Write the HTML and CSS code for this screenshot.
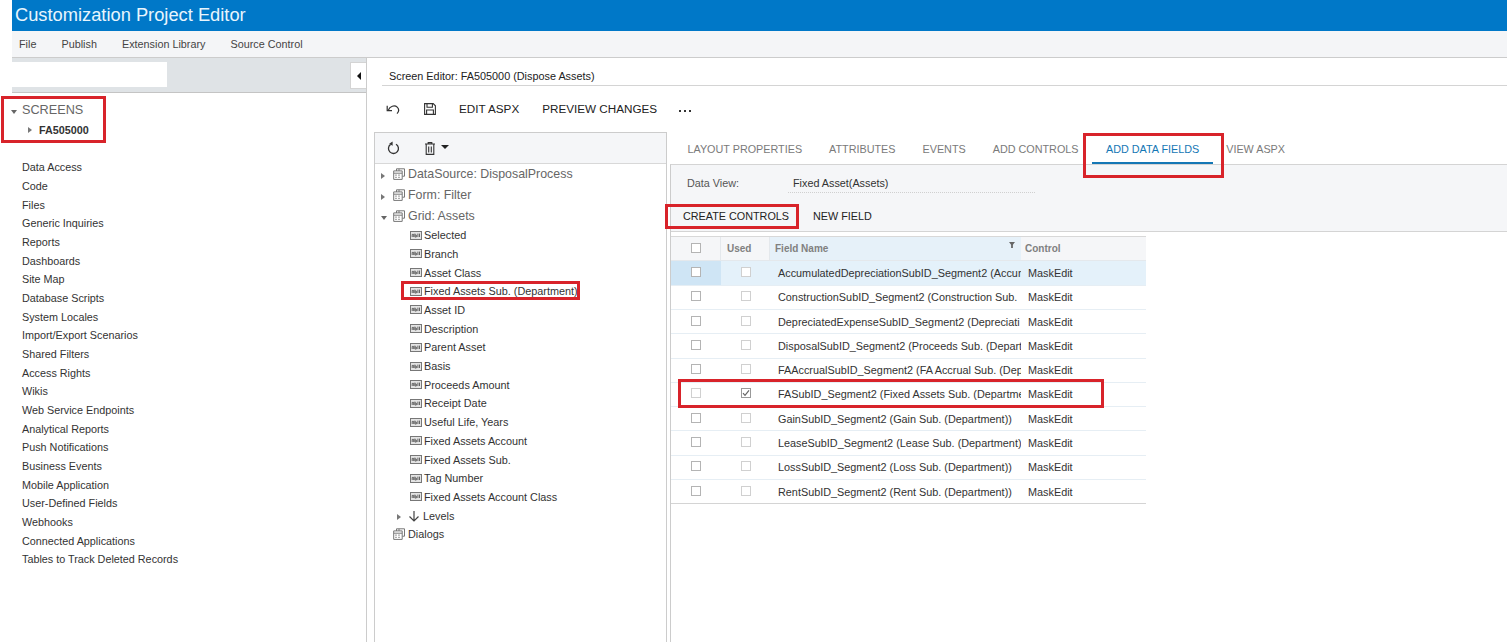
FILE: index.html
```html
<!DOCTYPE html>
<html lang="en">
<head>
<meta charset="utf-8">
<title>Customization Project Editor</title>
<link rel="stylesheet" href="styles.css">
</head>
<body>
<svg class="defs" width="0" height="0" aria-hidden="true">
  <symbol id="i-abl" viewBox="0 0 12 9">
    <rect x="0.5" y="0.5" width="11" height="8" fill="#e4e4e4" stroke="#777"/>
    <path d="M2.2 6V3.4h1.5V6M4.9 2.6V6h1.4V4H4.9M7.9 2.6V6M9.5 2.6V6" fill="none" stroke="#555" stroke-width="0.9"/>
  </symbol>
  <symbol id="i-form" viewBox="0 0 12 12">
    <path d="M3.5 3V0.8h8v7.4H9.2M6 3V0.8" fill="none" stroke="#777" stroke-width="1"/>
    <path d="M6 2.9h3.2v8.5H0.7V2.9zM0.7 5.2h8.5" fill="#fff" stroke="#777" stroke-width="1"/>
    <path d="M2.4 7.2h1.2M5.4 7.2h1.2M2.4 9.4h1.2M5.4 9.4h1.2" stroke="#777" stroke-width="1.2"/>
  </symbol>
  <symbol id="i-check" viewBox="0 0 10 10">
    <path d="M2 5.2l2 2.2 4-5" fill="none" stroke="#666" stroke-width="1.2"/>
  </symbol>
</svg>

<div class="app">
  <header class="titlebar">Customization Project Editor</header>
  <nav class="menubar">
    <span class="menu-item">File</span>
    <span class="menu-item">Publish</span>
    <span class="menu-item">Extension Library</span>
    <span class="menu-item">Source Control</span>
  </nav>

  <div class="workspace">
    <aside class="sidebar">
      <div class="sidebar-search">
        <div class="search-input"></div>
        <div class="collapse-btn"><i class="caret-left"></i></div>
      </div>
      <div class="sidebar-body">
        <div class="screens-row"><i class="caret-down"></i><span>SCREENS</span></div>
        <div class="screen-row"><i class="caret-right"></i><span>FA505000</span></div>
        <ul class="nav-list">
          <li>Data Access</li>
          <li>Code</li>
          <li>Files</li>
          <li>Generic Inquiries</li>
          <li>Reports</li>
          <li>Dashboards</li>
          <li>Site Map</li>
          <li>Database Scripts</li>
          <li>System Locales</li>
          <li>Import/Export Scenarios</li>
          <li>Shared Filters</li>
          <li>Access Rights</li>
          <li>Wikis</li>
          <li>Web Service Endpoints</li>
          <li>Analytical Reports</li>
          <li>Push Notifications</li>
          <li>Business Events</li>
          <li>Mobile Application</li>
          <li>User-Defined Fields</li>
          <li>Webhooks</li>
          <li>Connected Applications</li>
          <li>Tables to Track Deleted Records</li>
        </ul>
      </div>
    </aside>

    <main class="editor">
      <div class="editor-title">Screen Editor: FA505000 (Dispose Assets)</div>
      <div class="editor-toolbar">
        <svg class="tb-undo" width="14" height="12" viewBox="0 0 14 12"><path d="M2.4 7C3.8 3.2 8.6 1.6 11.2 4.2 13.2 6.2 12.8 8.8 11 10.6" fill="none" stroke="#333" stroke-width="1.2"/><path d="M1.2 2.8V7.6H6" fill="none" stroke="#333" stroke-width="1.2"/></svg>
        <svg class="tb-save" width="12" height="12" viewBox="0 0 12 12"><path d="M0.6 0.6h8.6l2.2 2.2v8.6H0.6zM3 0.8v3.4h5.4V0.8M2.6 11.2V7h6.8v4.2" fill="none" stroke="#333" stroke-width="1.1"/></svg>
        <span class="tb-btn tb-edit">EDIT ASPX</span>
        <span class="tb-btn tb-preview">PREVIEW CHANGES</span>
        <span class="tb-more"><i></i><i></i><i></i></span>
      </div>

      <div class="split">
        <section class="tree">
          <div class="tree-toolbar">
            <svg class="tt-refresh" width="13" height="14" viewBox="0 0 13 14"><path d="M3.6 3.4a5 5 0 1 0 5.4-.2" fill="none" stroke="#333" stroke-width="1.3"/><path d="M5.6 0.4v4.4l-3.4-2z" fill="#333"/></svg>
            <svg class="tt-trash" width="10" height="13" viewBox="0 0 10 13"><path d="M0 2h10M3.2 2V.6h3.6V2M1.2 2.4v10h7.6v-10M3.7 4.4v6M6.3 4.4v6" fill="none" stroke="#333" stroke-width="1.1"/></svg>
            <i class="caret-down dark"></i>
          </div>
          <div class="tree-body">
            <div class="node-top"><i class="caret-right"></i><svg class="ico-form"><use href="#i-form"/></svg><span>DataSource: DisposalProcess</span></div>
            <div class="node-top"><i class="caret-right"></i><svg class="ico-form"><use href="#i-form"/></svg><span>Form: Filter</span></div>
            <div class="node-top"><i class="caret-down"></i><svg class="ico-form"><use href="#i-form"/></svg><span>Grid: Assets</span></div>
            <div class="node-leaf"><svg class="ico-abl"><use href="#i-abl"/></svg><span>Selected</span></div>
            <div class="node-leaf"><svg class="ico-abl"><use href="#i-abl"/></svg><span>Branch</span></div>
            <div class="node-leaf"><svg class="ico-abl"><use href="#i-abl"/></svg><span>Asset Class</span></div>
            <div class="node-leaf"><svg class="ico-abl"><use href="#i-abl"/></svg><span>Fixed Assets Sub. (Department)</span></div>
            <div class="node-leaf"><svg class="ico-abl"><use href="#i-abl"/></svg><span>Asset ID</span></div>
            <div class="node-leaf"><svg class="ico-abl"><use href="#i-abl"/></svg><span>Description</span></div>
            <div class="node-leaf"><svg class="ico-abl"><use href="#i-abl"/></svg><span>Parent Asset</span></div>
            <div class="node-leaf"><svg class="ico-abl"><use href="#i-abl"/></svg><span>Basis</span></div>
            <div class="node-leaf"><svg class="ico-abl"><use href="#i-abl"/></svg><span>Proceeds Amount</span></div>
            <div class="node-leaf"><svg class="ico-abl"><use href="#i-abl"/></svg><span>Receipt Date</span></div>
            <div class="node-leaf"><svg class="ico-abl"><use href="#i-abl"/></svg><span>Useful Life, Years</span></div>
            <div class="node-leaf"><svg class="ico-abl"><use href="#i-abl"/></svg><span>Fixed Assets Account</span></div>
            <div class="node-leaf"><svg class="ico-abl"><use href="#i-abl"/></svg><span>Fixed Assets Sub.</span></div>
            <div class="node-leaf"><svg class="ico-abl"><use href="#i-abl"/></svg><span>Tag Number</span></div>
            <div class="node-leaf"><svg class="ico-abl"><use href="#i-abl"/></svg><span>Fixed Assets Account Class</span></div>
            <div class="node-leaf node-levels"><i class="caret-right"></i><svg class="ico-down" width="12" height="12" viewBox="0 0 12 12"><path d="M6 1v10M1.5 6.5L6 11l4.5-4.5" fill="none" stroke="#444" stroke-width="1.2"/></svg><span>Levels</span></div>
            <div class="node-dialogs"><svg class="ico-form"><use href="#i-form"/></svg><span>Dialogs</span></div>
          </div>
        </section>

        <section class="panel">
          <div class="tabs">
            <span class="tab">LAYOUT PROPERTIES</span>
            <span class="tab">ATTRIBUTES</span>
            <span class="tab">EVENTS</span>
            <span class="tab">ADD CONTROLS</span>
            <span class="tab active">ADD DATA FIELDS</span>
            <span class="tab">VIEW ASPX</span>
          </div>
          <div class="panel-body">
            <div class="form-area">
              <div class="data-view">
                <span class="dv-label">Data View:</span>
                <span class="dv-value">Fixed Asset(Assets)</span>
              </div>
              <div class="actions">
                <span class="act act-create">CREATE CONTROLS</span>
                <span class="act">NEW FIELD</span>
              </div>
            </div>
            <div class="grid">
              <div class="g-head">
                <div class="gh-sel"><b class="cb"></b></div>
                <div class="gh-used">Used</div>
                <div class="gh-name">Field Name<i class="filter"></i></div>
                <div class="gh-ctrl">Control</div>
              </div>
              <div class="g-row selected"><div class="c-sel"><b class="cb"></b></div><div class="c-used"><b class="cb light"></b></div><div class="c-name">AccumulatedDepreciationSubID_Segment2 (Accum</div><div class="c-ctrl">MaskEdit</div></div>
              <div class="g-row"><div class="c-sel"><b class="cb"></b></div><div class="c-used"><b class="cb light"></b></div><div class="c-name">ConstructionSubID_Segment2 (Construction Sub.</div><div class="c-ctrl">MaskEdit</div></div>
              <div class="g-row"><div class="c-sel"><b class="cb"></b></div><div class="c-used"><b class="cb light"></b></div><div class="c-name">DepreciatedExpenseSubID_Segment2 (Depreciati</div><div class="c-ctrl">MaskEdit</div></div>
              <div class="g-row"><div class="c-sel"><b class="cb"></b></div><div class="c-used"><b class="cb light"></b></div><div class="c-name">DisposalSubID_Segment2 (Proceeds Sub. (Depart</div><div class="c-ctrl">MaskEdit</div></div>
              <div class="g-row"><div class="c-sel"><b class="cb"></b></div><div class="c-used"><b class="cb light"></b></div><div class="c-name">FAAccrualSubID_Segment2 (FA Accrual Sub. (Dep</div><div class="c-ctrl">MaskEdit</div></div>
              <div class="g-row"><div class="c-sel"><b class="cb light"></b></div><div class="c-used"><b class="cb on"><svg width="10" height="10"><use href="#i-check"/></svg></b></div><div class="c-name">FASubID_Segment2 (Fixed Assets Sub. (Departme</div><div class="c-ctrl">MaskEdit</div></div>
              <div class="g-row"><div class="c-sel"><b class="cb"></b></div><div class="c-used"><b class="cb light"></b></div><div class="c-name">GainSubID_Segment2 (Gain Sub. (Department))</div><div class="c-ctrl">MaskEdit</div></div>
              <div class="g-row"><div class="c-sel"><b class="cb"></b></div><div class="c-used"><b class="cb light"></b></div><div class="c-name">LeaseSubID_Segment2 (Lease Sub. (Department)</div><div class="c-ctrl">MaskEdit</div></div>
              <div class="g-row"><div class="c-sel"><b class="cb"></b></div><div class="c-used"><b class="cb light"></b></div><div class="c-name">LossSubID_Segment2 (Loss Sub. (Department))</div><div class="c-ctrl">MaskEdit</div></div>
              <div class="g-row last"><div class="c-sel"><b class="cb"></b></div><div class="c-used"><b class="cb light"></b></div><div class="c-name">RentSubID_Segment2 (Rent Sub. (Department))</div><div class="c-ctrl">MaskEdit</div></div>
            </div>
          </div>
        </section>
      </div>
    </main>
  </div>

  <div class="mark mark-screens"></div>
  <div class="mark mark-node"></div>
  <div class="mark mark-tab"></div>
  <div class="mark mark-create"></div>
  <div class="mark mark-row"></div>
</div>
</body>
</html>
```
FILE: styles.css
```css
* { box-sizing: border-box; }
html, body { margin: 0; padding: 0; background: #fff; }
body { font-family: "Liberation Sans", Arial, sans-serif; color: #222; overflow: hidden; }
.defs { position: absolute; }
.app { position: relative; width: 1507px; height: 642px; overflow: hidden; display: flex; flex-direction: column; }
i { display: block; font-style: normal; }

.titlebar { margin-left: 12px; height: 31px; padding-left: 3px; background: #0078c8; color: #e8f5fd; font-size: 18.3px; line-height: 30px; }
.menubar { margin-left: 12px; height: 27px; display: flex; align-items: center; padding: 0 0 1px 7px; gap: 25.1px; background: #f4f5f7; border-bottom: 1px solid #ccc; font-size: 10.8px; color: #444; }

.workspace { flex: 1; display: flex; min-height: 0; }
.sidebar { width: 367px; flex: none; display: flex; flex-direction: column; border-right: 1px solid #ccc; }
.sidebar-search { margin-left: 12px; height: 35px; display: flex; justify-content: space-between; align-items: flex-start; padding-top: 4px; background: #dfe3e6; border-bottom: 1px solid #c4c4c4; }
.search-input { width: 155px; height: 25px; background: #fff; }
.collapse-btn { width: 16px; height: 27px; background: #fff; border: 1px solid #d4d4d4; border-right: 0; display: flex; align-items: center; padding-left: 6px; }
.caret-left { width: 0; height: 0; border: 4px solid transparent; border-left: 0; border-right-color: #111; }
.sidebar-body { flex: 1; padding-left: 10px; padding-top: 5px; }
.screens-row { display: flex; align-items: center; height: 22px; font-size: 12.7px; color: #666; }
.screens-row span { margin: 2px 0 0 5px; }
.screens-row .caret-down { margin: 6px 0 0 1px; }
.screen-row { display: flex; align-items: center; height: 20px; margin-left: 18px; font-size: 10.8px; font-weight: bold; color: #333; }
.screen-row span { margin-left: 7px; }
.nav-list { list-style: none; margin: 18.3px 0 0 12px; padding: 0; font-size: 10.8px; line-height: 18.67px; color: #333; }

.caret-right { width: 0; height: 0; border: 3.5px solid transparent; border-right: 0; border-left: 4px solid #777; flex: none; }
.caret-down { width: 0; height: 0; border: 3px solid transparent; border-bottom: 0; border-top: 4px solid #666; flex: none; }
.caret-down.dark { border-width: 4px 4px 0; border-top-color: #222; margin-left: 6px; margin-top: -2px; }

.editor { flex: 1; min-width: 0; display: flex; flex-direction: column; }
.editor-title { margin-left: 15px; height: 28px; padding: 11px 0 0 7px; border-bottom: 1px solid #d4d4d4; font-size: 10.85px; line-height: 14px; color: #222; }
.editor-toolbar { height: 46px; flex: none; display: flex; align-items: center; padding-left: 19px; color: #222; }
.tb-save { margin-left: 24px; }
.tb-btn { font-size: 11.7px; margin-bottom: 2px; }
.tb-edit { margin-left: 23px; }
.tb-preview { margin-left: 23px; }
.tb-more { display: flex; gap: 3px; margin-left: 22px; padding-top: 3px; }
.tb-more i { width: 2px; height: 2px; background: #333; }

.split { flex: 1; min-height: 0; display: flex; margin-left: 7px; }
.tree { width: 293px; flex: none; border: 1px solid #ccc; border-bottom: 0; display: flex; flex-direction: column; }
.tree-toolbar { height: 31px; flex: none; display: flex; align-items: center; padding-left: 12px; background: #f5f6f8; border-bottom: 1px solid #d8d8d8; }
.tt-trash { margin-left: 25px; }
.tree-body { flex: 1; padding-left: 6px; }
.node-top { display: flex; align-items: center; height: 21px; font-size: 12.4px; color: #666; }
.node-top:first-child { height: 20.4px; }
.node-top:nth-child(3) { height: 20.4px; }
.node-top .caret-right, .node-top .caret-down { margin-top: 4px; }
.node-top .caret-down { margin-right: -2px; }
.node-top .ico-form { margin-left: 8px; }
.node-top span { margin-left: 3px; }
.ico-form { width: 12px; height: 12px; flex: none; }
.ico-abl { width: 12px; height: 9px; flex: none; }
.node-leaf { display: flex; align-items: center; height: 18.71px; padding-left: 29px; font-size: 10.85px; color: #333; }
.node-leaf span { margin-left: 2px; }
.node-levels { padding-left: 16px; }
.node-levels span { margin-left: 3px; }
.node-levels .caret-right { margin-top: 2px; }
.ico-down { margin-left: 7px; flex: none; }
.node-dialogs { display: flex; align-items: center; height: 18.7px; padding-left: 12px; font-size: 10.85px; color: #333; }
.node-dialogs span { margin-left: 3px; }

.panel { flex: 1; min-width: 0; margin-left: 3px; display: flex; flex-direction: column; }
.tabs { height: 32px; flex: none; display: flex; padding-left: 4px; font-size: 10.8px; color: #7a7a7a; white-space: nowrap; }
.tab { padding: 10px 13.5px 0; height: 32px; line-height: 14px; }
.tab.active { color: #1477b5; padding: 10px 13.5px 0 14px; border-bottom: 2px solid #1477b5; }
.panel-body { flex: 1; border-left: 1px solid #ccc; border-top: 1px solid #d4d4d4; }
.form-area { height: 67px; background: #f5f6f8; border-bottom: 1px solid #d4d4d4; }
.data-view { display: flex; height: 27px; padding: 11px 0 0 16px; margin-right: 472px; font-size: 10.8px; line-height: 14px; }
.dv-label { color: #555; width: 101px; flex: none; }
.dv-value { flex: 1; color: #333; border-bottom: 1px dotted #d0d0d0; padding-left: 5px; height: 17px; }
.actions { display: flex; padding: 17px 0 0 12px; font-size: 10.8px; line-height: 14px; color: #222; gap: 24px; }

.grid { margin-top: 4px; width: 475px; border-top: 1px solid #d8d8d8; font-size: 10.85px; }
.g-head, .g-row { display: grid; grid-template-columns: 50px 49px 251px 1fr; }
.g-head { height: 24.2px; background: #f5f6f8; font-size: 10px; font-weight: bold; color: #808080; border-bottom: 1px solid #e4e8ec; align-items: stretch; }
.g-head > div { display: flex; align-items: center; }
.gh-sel { justify-content: center; border-right: 1px solid #e4e8ec; }
.gh-used { padding-left: 6px; border-right: 1px solid #e4e8ec; }
.gh-name { padding-left: 5px; background: #e6f1f9; position: relative; }
.gh-ctrl { padding-left: 4px; }
.filter { position: absolute; right: 6px; top: 5px; width: 6px; height: 6px; background: #666; clip-path: polygon(0 0, 100% 0, 65% 45%, 65% 100%, 35% 100%, 35% 45%); }
.g-row { height: 24.33px; border-bottom: 1px solid #e6eef4; align-items: center; color: #333; }
.g-row > div { display: flex; align-items: center; height: 100%; }
.g-row.selected { background: #e4f1fa; }
.g-row.selected .c-sel { background: #cfe5f5; }
.g-row.last { border-bottom: 1px solid #d4d4d4; }
.c-sel, .c-used { justify-content: center; }
.c-name { padding-left: 8px; overflow: hidden; white-space: nowrap; }
.c-ctrl { padding-left: 7px; }
.cb { display: block; width: 10px; height: 10px; background: #fff; border: 1px solid #b4b4b4; margin-bottom: 2px; position: relative; }
.cb.light { border-color: #d0d0d0; }
.cb.on { border-color: #999; }
.cb.on svg { position: absolute; left: -1px; top: -1px; }

.mark { position: absolute; border: 3px solid #d8232a; pointer-events: none; }
.mark-screens { left: 1px; top: 96px; width: 105px; height: 47px; }
.mark-node { left: 401px; top: 281px; width: 179px; height: 19px; }
.mark-tab { left: 1083px; top: 133px; width: 141px; height: 45px; }
.mark-create { left: 665px; top: 204px; width: 134px; height: 25px; }
.mark-row { left: 678px; top: 379px; width: 426px; height: 29px; }
```
